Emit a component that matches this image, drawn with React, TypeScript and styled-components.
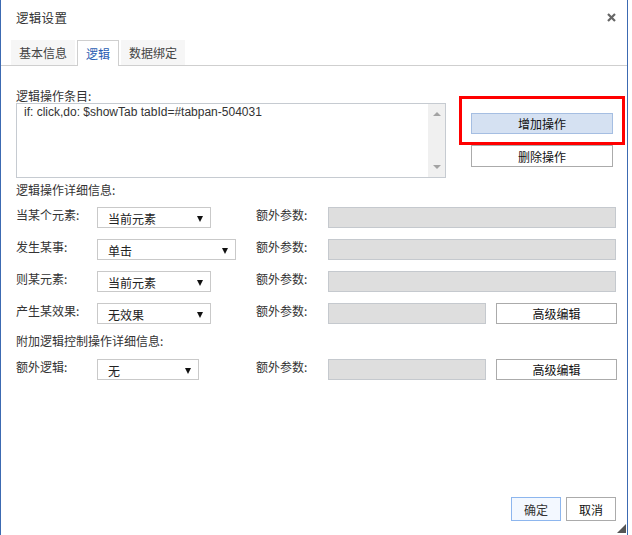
import styled, { createGlobalStyle } from "styled-components";

const GlobalStyle = createGlobalStyle`
  html, body {
    margin: 0;
    padding: 0;
    background: #fff;
  }
  body {
    font-family: "Noto Sans CJK SC", "Liberation Sans", sans-serif;
    font-size: 12px;
    color: #333;
  }
`;

const Dialog = styled.div`
  position: relative;
  box-sizing: border-box;
  width: 628px;
  height: 535px;
  background: #fff;
  border-left: 1px solid #3c6ab2;
  border-right: 1px solid #3c6ab2;
  display: flex;
  flex-direction: column;
`;

const TitleBar = styled.div`
  height: 34px;
  padding: 0 11px 0 15px;
  display: flex;
  align-items: center;
  justify-content: space-between;
`;

const Title = styled.span`
  font-size: 12.5px;
  color: #333;
  letter-spacing: 0.3px;
`;

const Close = styled.svg`
  width: 9px;
  height: 9px;
  margin-top: 1px;
`;

const TabBar = styled.div`
  margin-top: 6px;
  height: 25px;
  padding-left: 10px;
  display: flex;
  gap: 2px;
  border-bottom: 1px solid #cfcfcf;
`;

const Tab = styled.div<{ $active?: boolean }>`
  box-sizing: border-box;
  height: ${(p) => (p.$active ? "26px" : "25px")};
  padding: 0 8px;
  display: flex;
  align-items: center;
  font-size: 12px;
  color: ${(p) => (p.$active ? "#2a5db2" : "#444")};
  background: ${(p) => (p.$active ? "#fff" : "#f6f6f6")};
  border: ${(p) => (p.$active ? "1px solid #cfcfcf" : "none")};
  border-bottom: none;
`;

const Body = styled.div`
  padding-left: 15px;
  display: flex;
  flex-direction: column;
`;

const TopSection = styled.div`
  margin-top: 23px;
  display: flex;
  align-items: flex-start;
`;

const LeftCol = styled.div`
  width: 430px;
  display: flex;
  flex-direction: column;
`;

const Label = styled.div<{ $mt?: number }>`
  line-height: 14px;
  font-size: 12px;
  color: #333;
  margin-top: ${(p) => p.$mt ?? 0}px;
`;

const TextBox = styled.div`
  box-sizing: border-box;
  height: 75px;
  border: 1px solid #c6cbd1;
  display: flex;
`;

const TextContent = styled.div`
  flex: 1;
  padding: 1px 7px;
  font-family: "Liberation Sans", Arial, sans-serif;
  font-size: 12px;
  line-height: 14px;
  color: #333;
`;

const ScrollBar = styled.div`
  width: 17px;
  background: #f0f0f0;
  display: flex;
  flex-direction: column;
  align-items: center;
  justify-content: space-between;
  padding: 8px 0;
`;

const Arrow = styled.div<{ $up?: boolean; $color?: string; $size?: number }>`
  width: 0;
  height: 0;
  border-left: ${(p) => p.$size ?? 4}px solid transparent;
  border-right: ${(p) => p.$size ?? 4}px solid transparent;
  ${(p) =>
    p.$up
      ? `border-bottom: 4px solid ${p.$color ?? "#a3a3a3"};`
      : `border-top: ${p.$size === 3 ? 6 : 4}px solid ${p.$color ?? "#a3a3a3"};`}
`;

const RightCol = styled.div`
  margin-left: 13px;
  margin-top: 7px;
  display: flex;
  flex-direction: column;
`;

const Highlight = styled.div`
  box-sizing: border-box;
  width: 166px;
  height: 49px;
  border: 3px solid #ff0000;
  padding: 14px 0 0 9px;
`;

const Button = styled.div<{ $w: number; $h?: number; $variant?: "blue" | "primary" }>`
  box-sizing: border-box;
  width: ${(p) => p.$w}px;
  height: ${(p) => p.$h ?? 21}px;
  display: flex;
  align-items: center;
  justify-content: center;
  font-size: 12px;
  color: ${(p) => (p.$variant === "primary" ? "#333" : "#111")};
  background: ${(p) =>
    p.$variant === "blue" ? "#d5e1f2" : p.$variant === "primary" ? "#f3f8ff" : "#fff"};
  border: 1px solid
    ${(p) =>
      p.$variant === "blue" ? "#a5bee2" : p.$variant === "primary" ? "#8db6ee" : "#ababab"};
`;

const DeleteButton = styled(Button)`
  margin-left: 12px;
`;

const Row = styled.div<{ $mt?: number }>`
  margin-top: ${(p) => p.$mt ?? 11}px;
  height: 21px;
  display: grid;
  grid-template-columns: 81px 159px 72px auto;
  align-items: start;
`;

const RowLabel = styled.div`
  line-height: 14px;
  margin-top: 1px;
  font-size: 12px;
  color: #333;
`;

const Select = styled.div<{ $w: number }>`
  box-sizing: border-box;
  width: ${(p) => p.$w}px;
  height: 21px;
  border: 1px solid #c9c9c9;
  background: #fff;
  display: flex;
  align-items: center;
  justify-content: space-between;
  padding: 2px 7px 0 10px;
  font-size: 12px;
  color: #222;
`;

const Fields = styled.div`
  display: flex;
  gap: 10px;
`;

const ParamInput = styled.div<{ $w: number }>`
  box-sizing: border-box;
  width: ${(p) => p.$w}px;
  height: 21px;
  background: #dedede;
  border: 1px solid #c5c9ce;
`;

const Footer = styled.div`
  margin-top: auto;
  padding: 0 11px 14px 0;
  display: flex;
  justify-content: flex-end;
  gap: 5px;
`;

const Grip = styled.div`
  position: absolute;
  right: 1px;
  bottom: 2px;
  width: 0;
  height: 0;
  border-left: 9px solid transparent;
  border-bottom: 9px solid #555;
`;

type RowData = {
  label: string;
  value: string;
  selectW: number;
  inputW: number;
  advanced?: boolean;
  mt?: number;
};

const rows: RowData[] = [
  { label: "当某个元素:", value: "当前元素", selectW: 114, inputW: 288, mt: 10 },
  { label: "发生某事:", value: "单击", selectW: 139, inputW: 288 },
  { label: "则某元素:", value: "当前元素", selectW: 114, inputW: 288 },
  { label: "产生某效果:", value: "无效果", selectW: 114, inputW: 158, advanced: true },
];

const FieldRow = ({ label, value, selectW, inputW, advanced, mt }: RowData) => (
  <Row $mt={mt}>
    <RowLabel>{label}</RowLabel>
    <Select $w={selectW}>
      <span>{value}</span>
      <Arrow $color="#111" $size={3} />
    </Select>
    <RowLabel>额外参数:</RowLabel>
    <Fields>
      <ParamInput $w={inputW} />
      {advanced && <Button $w={121}>高级编辑</Button>}
    </Fields>
  </Row>
);

const App = () => {
  return (
    <>
      <GlobalStyle />
      <Dialog>
        <TitleBar>
          <Title>逻辑设置</Title>
          <Close viewBox="0 0 9 9">
            <path d="M1 1 L8 8 M8 1 L1 8" stroke="#666" strokeWidth="2.2" />
          </Close>
        </TitleBar>
        <TabBar>
          <Tab>基本信息</Tab>
          <Tab $active>逻辑</Tab>
          <Tab>数据绑定</Tab>
        </TabBar>
        <Body>
          <TopSection>
            <LeftCol>
              <Label>逻辑操作条目:</Label>
              <TextBox>
                <TextContent>if: click,do: $showTab tabId=#tabpan-504031</TextContent>
                <ScrollBar>
                  <Arrow $up />
                  <Arrow />
                </ScrollBar>
              </TextBox>
            </LeftCol>
            <RightCol>
              <Highlight>
                <Button $w={142} $variant="blue">增加操作</Button>
              </Highlight>
              <DeleteButton $w={142} $h={22}>删除操作</DeleteButton>
            </RightCol>
          </TopSection>
          <Label $mt={5}>逻辑操作详细信息:</Label>
          {rows.map((r) => (
            <FieldRow key={r.label} {...r} />
          ))}
          <Label $mt={10}>附加逻辑控制操作详细信息:</Label>
          <FieldRow label="额外逻辑:" value="无" selectW={102} inputW={158} advanced />
        </Body>
        <Footer>
          <Button $w={50} $h={24} $variant="primary">确定</Button>
          <Button $w={50} $h={24}>取消</Button>
        </Footer>
        <Grip />
      </Dialog>
    </>
  );
};

export default App;
